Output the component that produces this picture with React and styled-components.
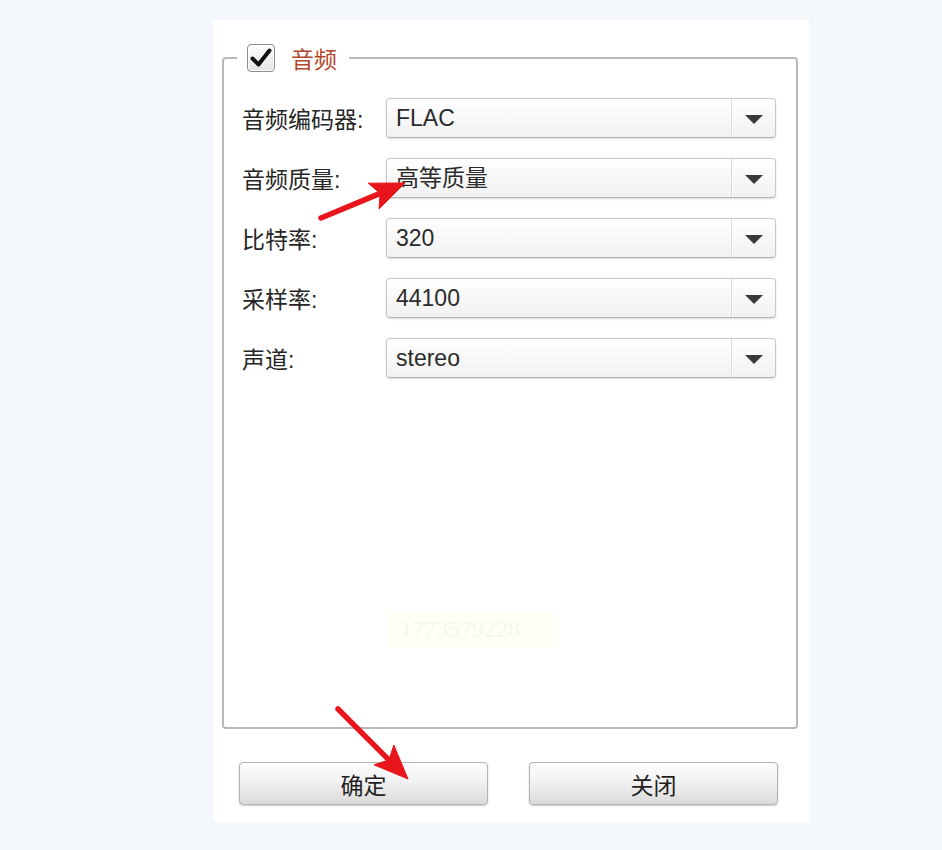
import styled, { createGlobalStyle } from "styled-components";

const GlobalStyle = createGlobalStyle`
  body {
    margin: 0;
    background: #f4f7fc;
    font-family: "Liberation Sans", "Noto Sans CJK SC", sans-serif;
  }
`;

const rows = [
  { label: "音频编码器:", value: "FLAC" },
  { label: "音频质量:", value: "高等质量" },
  { label: "比特率:", value: "320" },
  { label: "采样率:", value: "44100" },
  { label: "声道:", value: "stereo" },
];

function Arrow({ from, to }) {
  const [x1, y1] = from;
  const [x2, y2] = to;
  const len = Math.hypot(x2 - x1, y2 - y1);
  const ux = (x2 - x1) / len;
  const uy = (y2 - y1) / len;
  const headLen = 34;
  const half = 14;
  const bx = x2 - ux * headLen;
  const by = y2 - uy * headLen;
  const points = [
    [x2, y2],
    [bx - uy * half, by + ux * half],
    [bx + ux * 7, by + uy * 7],
    [bx + uy * half, by - ux * half],
  ]
    .map((p) => p.join(","))
    .join(" ");
  return (
    <g fill="#e8161c" stroke="#e8161c">
      <line
        x1={x1}
        y1={y1}
        x2={bx + ux * 9}
        y2={by + uy * 9}
        strokeWidth="5.5"
        strokeLinecap="round"
      />
      <polygon points={points} strokeWidth="1" strokeLinejoin="round" />
    </g>
  );
}

export default function App() {
  return (
    <>
      <GlobalStyle />
      <Page>
        <Panel>
          <Group>
            <Legend>
              <CheckBox>
                <svg width="22" height="22" viewBox="0 0 22 22">
                  <path
                    d="M2.5 11.5 L8.5 17.5 L19.5 3.5"
                    fill="none"
                    stroke="#111"
                    strokeWidth="4"
                    strokeLinecap="round"
                    strokeLinejoin="round"
                  />
                </svg>
              </CheckBox>
              <LegendText>音频</LegendText>
            </Legend>
            <Body>
              {rows.map((row) => (
                <Row key={row.label}>
                  <Label>{row.label}</Label>
                  <Select>
                    <SelectValue>{row.value}</SelectValue>
                    <SelectButton>
                      <Caret />
                    </SelectButton>
                  </Select>
                </Row>
              ))}
              <Watermark>1773579228</Watermark>
            </Body>
          </Group>
          <Buttons>
            <Button>确定</Button>
            <Button>关闭</Button>
          </Buttons>
          <Overlay width="596" height="802" viewBox="0 0 596 802">
            <Arrow from={[108, 198]} to={[192, 163]} />
            <Arrow from={[125, 689]} to={[195, 759]} />
          </Overlay>
        </Panel>
      </Page>
    </>
  );
}

const Page = styled.div`
  padding: 20px 0 28px 213px;
`;

const Panel = styled.div`
  position: relative;
  width: 596px;
  height: 802px;
  box-sizing: border-box;
  padding: 24px 11px 0 9px;
  background: #fff;
  display: flex;
  flex-direction: column;
`;

const Group = styled.fieldset`
  margin: 0;
  padding: 0;
  height: 685px;
  box-sizing: border-box;
  border: 2px solid #b9b9b9;
  border-radius: 4px;
  min-width: 0;
`;

const Legend = styled.legend`
  display: flex;
  align-items: center;
  gap: 16px;
  margin-left: 13px;
  padding: 0 12px 0 10px;
  height: 28px;
`;

const CheckBox = styled.span`
  width: 28px;
  height: 28px;
  box-sizing: border-box;
  border: 1px solid #8c8c8c;
  border-radius: 4px;
  background: linear-gradient(#ffffff, #e2e2e2);
  box-shadow: inset 0 0 0 1px #fff;
  display: flex;
  align-items: center;
  justify-content: center;
`;

const LegendText = styled.span`
  font-size: 23px;
  color: #b4462c;
  line-height: 28px;
  margin-top: 4px;
`;

const Body = styled.div`
  padding: 26px 20px 0 18px;
  display: flex;
  flex-direction: column;
  gap: 20px;
`;

const Row = styled.div`
  display: flex;
  align-items: center;
`;

const Label = styled.span`
  width: 144px;
  font-size: 23px;
  color: #262626;
  flex-shrink: 0;
`;

const Select = styled.div`
  flex: 1;
  height: 40px;
  box-sizing: border-box;
  display: flex;
  border: 1px solid #c8c8c8;
  border-bottom-color: #b4b4b4;
  border-radius: 4px;
  background: linear-gradient(#ffffff, #f1f1f1);
  box-shadow: 0 1px 2px rgba(0, 0, 0, 0.15);
`;

const SelectValue = styled.span`
  flex: 1;
  padding-left: 9px;
  font-size: 23px;
  line-height: 38px;
  color: #2b2b2b;
`;

const SelectButton = styled.span`
  width: 43px;
  border-left: 1px solid #dadada;
  box-shadow: inset 1px 0 0 #fff;
  display: flex;
  align-items: center;
  justify-content: center;
`;

const Caret = styled.span`
  width: 0;
  height: 0;
  border-left: 9px solid transparent;
  border-right: 9px solid transparent;
  border-top: 9px solid #3a3a3a;
  margin-top: 2px;
`;

const Watermark = styled.div`
  align-self: flex-start;
  margin: 213px 0 0 146px;
  width: 167px;
  height: 37px;
  box-sizing: border-box;
  padding-left: 12px;
  background: #fffff6;
  font-family: "Liberation Serif", serif;
  font-size: 24px;
  line-height: 37px;
  color: #f6f6ef;
`;

const Buttons = styled.div`
  display: flex;
  justify-content: space-between;
  margin-top: 33px;
  padding: 0 20px 0 17px;
`;

const Button = styled.button`
  width: 249px;
  height: 43px;
  border: 1px solid #b2b2b2;
  border-radius: 4px;
  background: linear-gradient(#fdfdfd, #f2f2f2 45%, #dadada);
  box-shadow: 0 1px 2px rgba(0, 0, 0, 0.2);
  font-family: "Liberation Sans", "Noto Sans CJK SC", sans-serif;
  font-size: 23px;
  color: #1f1f1f;
  padding: 0;
`;

const Overlay = styled.svg`
  position: absolute;
  left: 0;
  top: 0;
  pointer-events: none;
`;
